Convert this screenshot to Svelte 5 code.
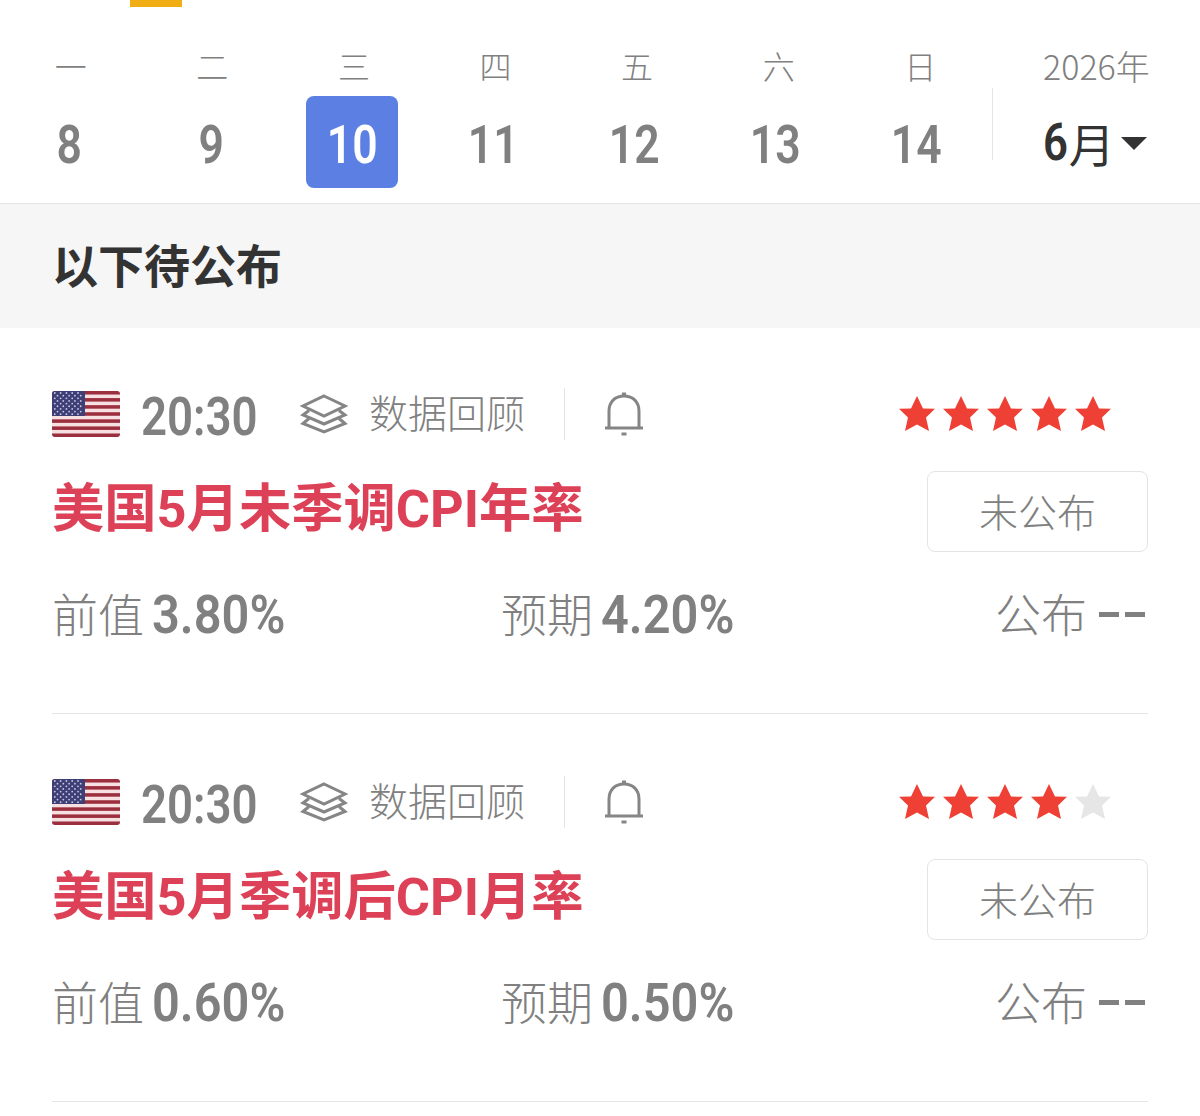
<script>
  const labels = ['一', '二', '三', '四', '五', '六', '日'];
  const days = [8, 9, 10, 11, 12, 13, 14];

  const events = [
    { time: '20:30', title: '美国5月未季调CPI年率', stars: 5, prev: '3.80%', expect: '4.20%' },
    { time: '20:30', title: '美国5月季调后CPI月率', stars: 4, prev: '0.60%', expect: '0.50%' }
  ];

  const stripes = [0, 1, 2, 3, 4, 5, 6];
  const starRows = [0, 1, 2, 3, 4, 5, 6, 7, 8];
  const fiveStars = [0, 1, 2, 3, 4];
</script>

<main class="page">
  <div class="tab-mark"></div>

  <section class="calendar">
    <div class="days">
      <div class="labels">
        {#each labels as l}
          <span class="label">{l}</span>
        {/each}
      </div>
      <div class="nums">
        {#each days as d}
          <span class="num" class:active={d === 10}><span class="narrow">{d}</span></span>
        {/each}
      </div>
    </div>
    <div class="month">
      <span class="year">2026年</span>
      <span class="month-val"><span class="narrow">6</span>月<i class="caret"></i></span>
    </div>
  </section>

  <h2 class="section-title">以下待公布</h2>

  <div class="list">
    {#each events as ev}
      <article class="event">
        <div class="top">
          <svg class="flag" viewBox="0 0 68 46" aria-hidden="true">
            <defs>
              <clipPath id="flag-clip"><rect width="68" height="46" rx="3" /></clipPath>
            </defs>
            <g clip-path="url(#flag-clip)">
              <rect width="68" height="46" fill="#f6e0e2" />
              {#each stripes as s}
                <rect y={s * 7.08} width="68" height="3.54" fill="#9c2f3e" />
              {/each}
              <rect width="33" height="25" fill="#3f3f78" />
              {#each starRows as r}
                {#each fiveStars as c}
                  <circle cx={(r % 2 ? 5.5 : 2.8) + c * 5.8} cy={2 + r * 2.65} r="0.9" fill="#c9c9e0" />
                {/each}
              {/each}
            </g>
          </svg>
          <span class="time"><span class="narrow">{ev.time}</span></span>
          <svg class="layers" viewBox="0 0 48 40" aria-hidden="true">
            <path d="M24 2 45 12 24 22 3 12Z" />
            <path d="M9 16.500 3 21 24 30 45 21 39 16.500" />
            <path d="M9 24.500 3 29.500 24 38 45 29.500 39 24.500" />
          </svg>
          <span class="review">数据回顾</span>
          <span class="divider"></span>
          <svg class="bell" viewBox="0 0 40 46" aria-hidden="true">
            <path d="M1 37H39M5 37V20C5 11 11 5 20 5S35 11 35 20V37" />
            <path d="M18 3H22M17.500 43H22.500" />
          </svg>
          <div class="stars">
            {#each fiveStars as i}
              <svg class="star" class:off={i >= ev.stars} viewBox="0 0 36 36" aria-hidden="true">
                <path d="M18 0 24 12.500 36 12.800 27 21.500 30 35 18 28.500 6 35 9 21.500 0 12.800 12 12.500Z" />
              </svg>
            {/each}
          </div>
        </div>

        <div class="middle">
          <h3 class="title">{ev.title}</h3>
          <button class="status">未公布</button>
        </div>

        <div class="values">
          <div class="val"><span>前值</span><b class="narrow">{ev.prev}</b></div>
          <div class="val"><span>预期</span><b class="narrow">{ev.expect}</b></div>
          <div class="val"><span>公布</span><b class="dash"><i></i><i></i></b></div>
        </div>
      </article>
    {/each}
  </div>
</main>

<style>
  :global(body) {
    background: #fff;
    font-family: "Noto Sans CJK SC", "Noto Sans", sans-serif;
    color: #808080;
  }
  .page {
    height: 1116px;
    overflow: hidden;
  }
  .narrow {
    display: inline-block;
    font-family: "Roboto", "Liberation Sans", sans-serif;
    transform: scaleX(0.84);
  }
  .tab-mark {
    width: 52px;
    height: 7px;
    margin-left: 130px;
    background: #f0ad14;
  }

  .calendar {
    display: flex;
    height: 196px;
    border-bottom: 1px solid #e6e6e6;
  }
  .days {
    width: 992px;
    padding-top: 36px;
  }
  .labels,
  .nums {
    display: grid;
    grid-template-columns: repeat(7, 1fr);
    justify-items: center;
  }
  .labels {
    width: 991px;
  }
  .nums {
    width: 988px;
    margin-left: -1px;
  }
  .label {
    height: 53px;
    line-height: 44px;
    font-size: 32px;
    font-weight: 300;
    color: #808080;
  }
  .num {
    width: 92px;
    height: 92px;
    border-radius: 8px;
    line-height: 88px;
    text-align: center;
    font-size: 53px;
    font-weight: 600;
    color: #808080;
  }
  .num.active {
    background: #5b7fe3;
    color: #fff;
  }
  .month {
    position: relative;
    display: flex;
    flex-direction: column;
    padding: 36px 0 0 51px;
  }
  .month::before {
    content: '';
    position: absolute;
    left: 0;
    top: 81px;
    width: 1px;
    height: 72px;
    background: #e4e4e4;
  }
  .year {
    height: 53px;
    line-height: 46px;
    font-size: 34px;
    font-weight: 300;
    color: #808080;
    white-space: nowrap;
  }
  .month-val {
    display: flex;
    align-items: center;
    height: 92px;
    font-size: 46px;
    font-weight: 400;
    color: #333;
  }
  .month-val .narrow {
    font-size: 52px;
    font-weight: 600;
    transform-origin: left;
    margin-right: -4px;
  }
  .caret {
    width: 0;
    height: 0;
    margin: 2px 0 0 6px;
    border: 13px solid transparent;
    border-top: 13px solid #333;
    border-bottom: 0;
  }

  .section-title {
    margin: 0;
    height: 124px;
    padding-left: 52px;
    background: #f6f6f6;
    line-height: 118px;
    font-size: 46px;
    font-weight: 700;
    color: #333;
  }

  .list {
    margin-top: -2px;
  }
  .event {
    height: 387px;
    margin: 0 52px;
    border-bottom: 1px solid #e6e6e6;
    box-sizing: content-box;
  }
  .top {
    display: flex;
    align-items: center;
    height: 52px;
    padding-top: 62px;
  }
  .flag {
    width: 68px;
    height: 46px;
    flex: none;
  }
  .time {
    width: 180px;
    padding-left: 21px;
    box-sizing: border-box;
    font-size: 53px;
    font-weight: 600;
    line-height: 52px;
    white-space: nowrap;
  }
  .time .narrow {
    transform: scaleX(0.86);
    transform-origin: left;
  }
  .layers {
    width: 48px;
    height: 40px;
    fill: none;
    stroke: #858585;
    stroke-width: 3;
  }
  .review {
    margin: 0 0 6px 21px;
    font-size: 39px;
    font-weight: 300;
    color: #808080;
    white-space: nowrap;
  }
  .divider {
    width: 1px;
    height: 52px;
    margin-left: 39px;
    background: #e4e4e4;
  }
  .bell {
    width: 40px;
    height: 46px;
    margin-left: 39px;
    fill: none;
    stroke: #858585;
    stroke-width: 3;
  }
  .stars {
    display: flex;
    gap: 8px;
    margin-left: auto;
    margin-right: 37px;
  }
  .star {
    width: 36px;
    height: 36px;
    fill: #ee4035;
  }
  .star.off {
    fill: #e6e6e6;
  }

  .middle {
    display: flex;
    justify-content: space-between;
    align-items: flex-start;
    padding-top: 31px;
  }
  .title {
    margin: 0;
    line-height: 76px;
    font-size: 52.300px;
    font-weight: 700;
    color: #dd4157;
    font-family: "Roboto", "Noto Sans CJK SC", sans-serif;
    white-space: nowrap;
  }
  .status {
    width: 221px;
    height: 81px;
    border: 1px solid #e4e4e4;
    border-radius: 8px;
    background: #fff;
    font-family: inherit;
    font-size: 39px;
    font-weight: 300;
    color: #808080;
    padding: 0 0 4px;
  }

  .values {
    display: grid;
    grid-template-columns: 449px 1fr auto;
    margin-top: 27px;
    padding-right: 3px;
  }
  .val {
    display: flex;
    align-items: center;
    height: 66px;
    font-size: 46px;
    font-weight: 300;
    color: #808080;
  }
  .val b {
    margin: 5px 0 0 8px;
    font-size: 53px;
    font-weight: 600;
    color: #808080;
    transform: scaleX(0.92);
    transform-origin: left;
  }
  .val .dash {
    display: flex;
    gap: 6px;
    margin: 4px 0 0 12px;
    transform: none;
  }
  .dash i {
    width: 20px;
    height: 5px;
    background: #808080;
  }
</style>
